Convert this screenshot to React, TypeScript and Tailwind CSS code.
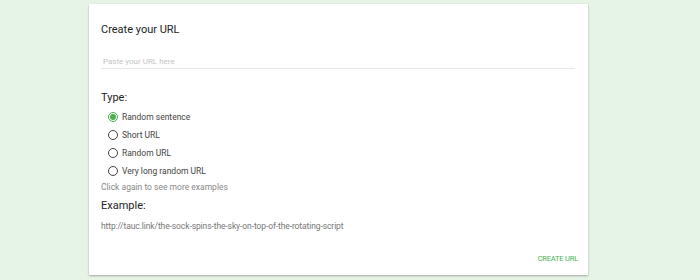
import React from "react";

const options = ["Random sentence", "Short URL", "Random URL", "Very long random URL"];

export default function App() {
  return (
    <div className="w-[700px] h-[280px] bg-[#e6f4e6] overflow-hidden pt-[4px] pl-[89px]" style={{ fontFamily: 'Roboto, sans-serif' }}>
      <div className="w-[499px] h-[271px] bg-white shadow-[0_1px_2px_rgba(0,0,0,0.3)] pl-[12px] pr-[13px] pt-[19px] flex flex-col">
        <div className="text-[11px] text-[#222] leading-[14px]">Create your URL</div>
        <div className="mt-[15px] border-b border-[#e8e8e8] h-[17px] flex items-end text-[8px] text-[#c4c4c4] leading-[12px] pl-[2px]">Paste your URL here</div>
        <div className="mt-[22px] text-[11px] text-[#222] leading-[14px]">Type:</div>
        <div className="mt-[3px] flex flex-col pl-[7px]">
          {options.map((o, i) => (
            <div key={o} className="flex items-center h-[18px] gap-[4px]">
              {i === 0 ? (
                <span className="w-[10px] h-[10px] rounded-full border border-[#4caf50] flex items-center justify-center">
                  <span className="w-[6px] h-[6px] rounded-full bg-[#4caf50]" />
                </span>
              ) : (
                <span className="w-[10px] h-[10px] rounded-full border border-[#444]" />
              )}
              <span className="text-[8.5px] text-[#444] leading-[18px]">{o}</span>
            </div>
          ))}
        </div>
        <div className="mt-[1px] text-[8.5px] text-[#888] leading-[12px]">Click again to see more examples</div>
        <div className="mt-[6px] text-[11px] text-[#222] leading-[14px]">Example:</div>
        <div className="mt-[7px] text-[8.5px] text-[#777] leading-[12px] tracking-[-0.1px]">http://tauc.link/the-sock-spins-the-sky-on-top-of-the-rotating-script</div>
        <div className="mt-[21px] -mr-[3px] flex justify-end">
          <span className="text-[7.5px] text-[#4caf50] leading-[12px] tracking-[-0.2px]">CREATE URL</span>
        </div>
      </div>
    </div>
  );
}
